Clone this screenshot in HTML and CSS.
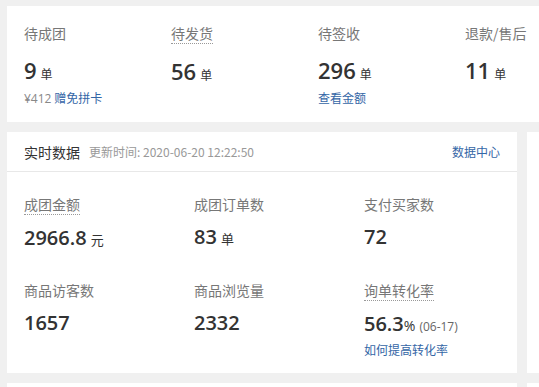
FILE: index.html
```html
<!DOCTYPE html>
<html lang="zh-CN">
<head>
    <meta charset="UTF-8">
    <meta name="viewport" content="width=device-width, initial-scale=1.0">
    <title>订单概况</title>
    <link rel="stylesheet" href="styles.css">
</head>
<body>
    <div class="page">
        <!-- 订单状态 -->
        <section class="card order-card">
            <div class="order-item">
                <span class="label">待成团</span>
                <div class="num">9<span class="unit">单</span></div>
                <div class="sub"><span class="muted">¥412</span> <a href="#">赠免拼卡</a></div>
            </div>
            <div class="order-item">
                <span class="label dotted">待发货</span>
                <div class="num">56<span class="unit">单</span></div>
            </div>
            <div class="order-item">
                <span class="label">待签收</span>
                <div class="num">296<span class="unit">单</span></div>
                <div class="sub"><a href="#">查看金额</a></div>
            </div>
            <div class="order-item">
                <span class="label">退款/售后</span>
                <div class="num">11<span class="unit">单</span></div>
            </div>
        </section>

        <div class="row">
            <!-- 实时数据 -->
            <section class="card data-card">
                <div class="card-head">
                    <h2>实时数据</h2>
                    <span class="update">更新时间: 2020-06-20 12:22:50</span>
                    <a href="#" class="more">数据中心</a>
                </div>
                <div class="data-grid">
                    <div class="data-item">
                        <span class="label dotted">成团金额</span>
                        <div class="val">2966.8<span class="unit">元</span></div>
                    </div>
                    <div class="data-item">
                        <span class="label">成团订单数</span>
                        <div class="val">83<span class="unit">单</span></div>
                    </div>
                    <div class="data-item">
                        <span class="label">支付买家数</span>
                        <div class="val">72</div>
                    </div>
                    <div class="data-item">
                        <span class="label">商品访客数</span>
                        <div class="val">1657</div>
                    </div>
                    <div class="data-item">
                        <span class="label">商品浏览量</span>
                        <div class="val">2332</div>
                    </div>
                    <div class="data-item">
                        <span class="label dotted">询单转化率</span>
                        <div class="val">56.3<span class="pct">%</span><span class="date">(06-17)</span></div>
                        <div class="sub"><a href="#">如何提高转化率</a></div>
                    </div>
                </div>
            </section>
            <section class="card side-card"></section>
        </div>

        <div class="row">
            <section class="card bottom-card"></section>
            <section class="card side-card"></section>
        </div>
    </div>
</body>
</html>
```

FILE: styles.css
```css
* {
    margin: 0;
    padding: 0;
    box-sizing: border-box;
}

body {
    font-family: "Noto Sans CJK SC", sans-serif;
    background-color: #f0f0f0;
    color: #333;
    overflow: hidden;
}

a {
    color: #3466a6;
    text-decoration: none;
}

.page {
    padding: 6px 0 0 7px;
    width: 560px;
}

.card {
    background-color: #fff;
}

.row {
    display: flex;
    gap: 10px;
    margin-top: 10px;
}

/* 订单状态 */
.order-card {
    display: flex;
    height: 116px;
    padding: 17px 0 0 17px;
}

.order-item {
    flex: 0 0 147px;
}

.label {
    display: block;
    width: fit-content;
    font-size: 14px;
    line-height: 20px;
    color: #777;
}

.label.dotted {
    border-bottom: 1px dotted #999;
}

.num {
    margin-top: 12px;
    font-family: "Open Sans", sans-serif;
    font-size: 22px;
    font-weight: 600;
    line-height: 30px;
    color: #333;
}

.unit {
    font-family: "Noto Sans CJK SC", sans-serif;
    font-size: 12px;
    font-weight: normal;
    line-height: 1;
    margin-left: 4px;
}

.sub {
    margin-top: 4px;
    font-size: 12px;
    line-height: 18px;
}

.muted {
    color: #888;
    font-family: "Open Sans", sans-serif;
}

/* 实时数据 */
.data-card {
    flex: 0 0 510px;
    width: 510px;
    height: 241px;
}

.card-head {
    display: flex;
    align-items: center;
    height: 40px;
    padding: 0 17px;
    border-bottom: 1px solid #e8e8e8;
}

.card-head h2 {
    font-size: 14px;
    font-weight: normal;
    color: #333;
}

.update {
    margin-left: 9px;
    font-size: 12px;
    color: #999;
}

.more {
    margin-left: auto;
    font-size: 12px;
}

.data-grid {
    display: grid;
    grid-template-columns: 170px 170px 150px;
    row-gap: 28px;
    padding: 22px 0 0 17px;
}

.data-item .val {
    margin-top: 9px;
    font-family: "Open Sans", sans-serif;
    font-size: 20px;
    font-weight: 600;
    line-height: 28px;
    color: #333;
}

.data-item .unit {
    font-size: 13px;
}

.pct {
    font-size: 14px;
    font-weight: normal;
    line-height: 1;
}

.date {
    margin-left: 4px;
    font-size: 12px;
    font-weight: normal;
    line-height: 1;
    color: #666;
}

.data-item .sub {
    margin-top: 3px;
}

.side-card {
    flex: 1;
}

.bottom-card {
    flex: 0 0 510px;
    height: 40px;
}
```
